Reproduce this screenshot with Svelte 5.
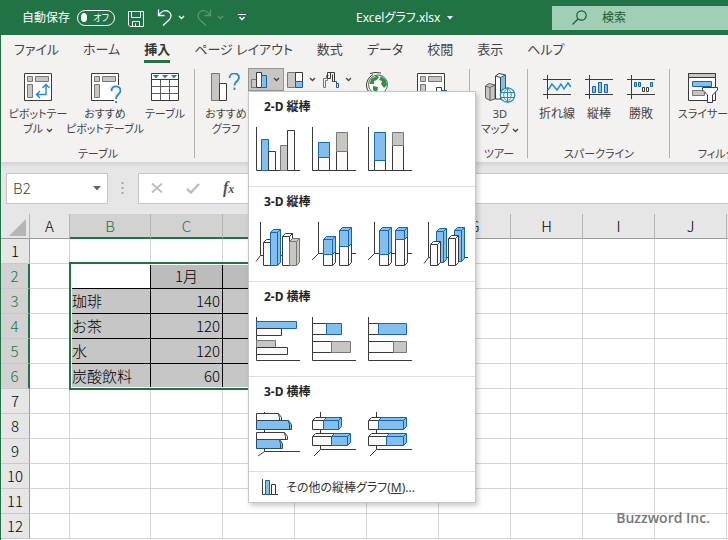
<script>
  const tabs = ['ファイル', 'ホーム', '挿入', 'ページ レイアウト', '数式', 'データ', '校閲', '表示', 'ヘルプ'];
  let activeTab = $state('挿入');
  let autosave = $state(false);
  let menuOpen = $state(true);
  let cellName = $state('B2');

  const cols = ['A', 'B', 'C', 'D', 'E', 'F', 'G', 'H', 'I', 'J', 'K'];
  const rows = Array.from({ length: 12 }, (_, i) => i + 1);
  const selCols = ['B', 'C', 'D', 'E'];
  const cells = {
    C2: '1月',
    B3: '珈琲', C3: 140,
    B4: 'お茶', C4: 120,
    B5: '水', C5: 120,
    B6: '炭酸飲料', C6: 60,
  };
  const selected = (c, r) => selCols.includes(c) && r > 1 && r < 7;

  // bars: [x, y, width, height, colour], depth > 0 draws them as boxes
  const sections = [
    {
      title: '2-D 縦棒', depth: 0,
      charts: [
        { name: '集合縦棒', axis: 'M.5 0V43.5H44', bars: [[5.5, 12.5, 7, 31, 'blue'], [12.5, 24.5, 7, 19, 'white'], [24.5, 18.5, 7, 25, 'gray'], [31.5, 3.5, 7, 40, 'white']] },
        { name: '積み上げ縦棒', axis: 'M.5 0V43.5H44', bars: [[6.5, 30.5, 11, 13, 'white'], [6.5, 15.5, 11, 15, 'blue'], [24.5, 24.5, 11, 19, 'white'], [24.5, 5.5, 11, 19, 'gray']] },
        { name: '100% 積み上げ縦棒', axis: 'M.5 0V43.5H44', bars: [[6.5, 33.5, 11, 10, 'white'], [6.5, 5.5, 11, 28, 'blue'], [24.5, 18.5, 11, 25, 'white'], [24.5, 5.5, 11, 13, 'gray']] },
      ],
    },
    {
      title: '3-D 縦棒', depth: 3,
      charts: [
        { name: '3-D 集合縦棒', axis: 'M4.5 0V33.5M0 39.5L4.5 33.5H44', bars: [[7.5, 20.5, 7, 23, 'white'], [14.5, 10.5, 7, 33, 'blue'], [26.5, 14.5, 7, 29, 'white'], [33.5, 19.5, 7, 24, 'gray']] },
        { name: '3-D 積み上げ縦棒', axis: 'M6.5 0V31.5M0 38L6.5 31.5H44', bars: [[11.5, 32.5, 9, 11, 'white'], [11.5, 17.5, 9, 15, 'blue'], [27.5, 24.5, 9, 19, 'white'], [27.5, 8.5, 9, 16, 'blue']] },
        { name: '3-D 100% 積み上げ縦棒', axis: 'M6.5 0V31.5M0 38L6.5 31.5H44', bars: [[11.5, 32.5, 9, 11, 'white'], [11.5, 8.5, 9, 24, 'blue'], [27.5, 17.5, 9, 26, 'white'], [27.5, 8.5, 9, 9, 'blue']] },
        { name: '3-D 縦棒', axis: 'M4.5 0V35.5M0 41.5L4.5 35.5H44', bars: [[12.5, 9.5, 7, 31, 'blue'], [6.5, 22.5, 7, 21, 'white'], [30.5, 8.5, 7, 31, 'blue'], [24.5, 16.5, 7, 27, 'white']] },
      ],
    },
    {
      title: '2-D 横棒', depth: 0,
      charts: [
        { name: '集合横棒', axis: 'M.5 0V43.5H44', bars: [[0.5, 4.5, 40, 7, 'blue'], [0.5, 11.5, 25, 7, 'white'], [0.5, 23.5, 19, 7, 'gray'], [0.5, 30.5, 31, 7, 'white']] },
        { name: '積み上げ横棒', axis: 'M.5 0V43.5H44', bars: [[0.5, 6.5, 14, 11, 'white'], [14.5, 6.5, 15, 11, 'blue'], [0.5, 24.5, 19, 11, 'white'], [19.5, 24.5, 19, 11, 'gray']] },
        { name: '100% 積み上げ横棒', axis: 'M.5 0V43.5H44', bars: [[0.5, 6.5, 10, 11, 'white'], [10.5, 6.5, 28, 11, 'blue'], [0.5, 24.5, 25, 11, 'white'], [25.5, 24.5, 13, 11, 'gray']] },
      ],
    },
    {
      title: '3-D 横棒', depth: 3,
      charts: [
        { name: '3-D 集合横棒', axis: 'M8.5 0V39.5M2 44L8.5 39.5H44', low: true, bars: [[0.5, 1.5, 22, 7, 'white'], [0.5, 8.5, 32, 9, 'blue'], [0.5, 20.5, 28, 7, 'white'], [0.5, 27.5, 23, 9, 'blue']] },
        { name: '3-D 積み上げ横棒', axis: 'M8.5 0V37.5M2 44L8.5 37.5H44', bars: [[0.5, 8.5, 11, 9, 'white'], [11.5, 8.5, 15, 9, 'blue'], [0.5, 24.5, 19, 9, 'white'], [19.5, 24.5, 16, 9, 'blue']] },
        { name: '3-D 100% 積み上げ横棒', axis: 'M8.5 0V37.5M2 44L8.5 37.5H44', bars: [[0.5, 8.5, 10, 9, 'white'], [10.5, 8.5, 25, 9, 'blue'], [0.5, 24.5, 18, 9, 'white'], [18.5, 24.5, 17, 9, 'blue']] },
      ],
    },
  ];

  function barPath([x, y, w, h], depth, low) {
    const r = x + w, b = y + h;
    if (!depth) return `M${x} ${y}H${r}V${b}H${x}Z`;
    // clustered bars show only the end cap, dropping to the right
    if (low) return `M${x} ${y}H${r}L${r + 3} ${y + 4}V${b}H${x}ZM${r} ${y}V${y + 1}L${r + 1} ${y + 4}V${b}`;
    return `M${x} ${y}L${x + 3} ${y - 3}H${r + 3}V${b - 3}L${r} ${b}H${x}ZM${x} ${y}H${r}V${b}M${r} ${y}L${r + 3} ${y - 3}`;
  }
</script>

{#snippet chevron()}
  <svg class="chev" width="7" height="5" viewBox="0 0 7 5"><path d="M1 1L3.500 3.500L6 1" fill="none" stroke="currentColor" stroke-width="1.300" /></svg>
{/snippet}

<div class="app">
  <header class="titlebar">
    <div class="quick">
      <span class="label" id="autosave">自動保存</span>
      <button class="toggle" role="switch" aria-checked={autosave} aria-labelledby="autosave" onclick={() => (autosave = !autosave)}><i></i>オフ</button>
      <button class="save" aria-label="上書き保存">
        <svg width="16" height="16" viewBox="0 0 16 16" fill="none" stroke="currentColor"><path d="M.5.5H15.500V15.500H2L.5 14ZM3.500.5V6.500H12.500V.5M4.500 15.500V10.500H11.500V15.500M7.500 15V12.500" /></svg>
      </button>
      <button class="undo" aria-label="元に戻す">
        <svg width="16" height="17" viewBox="0 0 16 17" fill="none" stroke="currentColor" stroke-width="1.300"><path d="M1.500.5V6.500H7.500M1.500 6.500C4 2.500 8 .5 11.500 2.500C15 4.500 14.500 8.500 12 11L6 16.500" /></svg>
        {@render chevron()}
      </button>
      <button class="redo" aria-label="やり直し">
        <svg width="16" height="17" viewBox="0 0 16 17" fill="none" stroke="currentColor" stroke-width="1.300"><path d="M14.500.5V6.500H8.500M14.500 6.500C12 2.500 8 .5 4.500 2.500C1 4.500 1.500 8.500 4 11L10 16.500" /></svg>
        {@render chevron()}
      </button>
      <button aria-label="クイック アクセス ツール バーのユーザー設定">
        <svg width="8" height="7" viewBox="0 0 8 7" fill="none" stroke="currentColor"><path d="M0 .5H8" /><path d="M1.500 3L4 5.500L6.500 3" stroke-width="1.500" /></svg>
      </button>
    </div>
    <button class="filename">Excelグラフ.xlsx
      <svg width="6" height="4" viewBox="0 0 6 4"><path d="M0 0H6L3 3.500Z" fill="currentColor" /></svg>
    </button>
    <label class="search">
      <svg width="15" height="15" viewBox="0 0 15 15" fill="none" stroke="currentColor" stroke-width="1.200"><circle cx="9.500" cy="5.500" r="4.700" /><path d="M6 9L.5 14.500" /></svg>
      <input type="text" placeholder="検索" aria-label="検索" />
    </label>
  </header>

  <nav class="tabs">
    {#each tabs as t}
      <button class="tab" class:active={activeTab === t} onclick={() => (activeTab = t)}>{t}</button>
    {/each}
  </nav>

  <div class="ribbon">
    <section class="group tables">
      <div class="tools">
        <button class="tool w64">
          <svg width="28" height="28" viewBox="0 0 28 28"><path class="sheet" d="M.5.5H27.500V27.500H.5Z" /><path class="part" d="M3.500 3.500H8.500V8.500H3.500ZM11.500 3.500H24.500V8.500H11.500ZM3.500 11.500H8.500V24.500H3.500Z" /><path class="accent" d="M22 11.500V21.500H12.500M18.500 15L22 11.500L25.500 15M16 18L12.500 21.500L16 25" /></svg>
          <span>ピボットテー<br />ブル {@render chevron()}</span>
        </button>
        <button class="tool w70">
          <svg width="32" height="30" viewBox="-2 0 32 30"><path class="sheet" d="M.5.5H27.500V27.500H.5Z" /><path class="part" d="M3.500 3.500H8.500V8.500H3.500ZM11.500 3.500H24.500V8.500H11.500ZM3.500 11.500H8.500V24.500H3.500Z" /><path d="M19 12H30V30H23V20H19Z" fill="#f3f2f1" /><path class="accent big" d="M20.500 18C20.500 12 29.500 12 29.500 17.500C29.500 21.500 25 21 25 26M25 28V30" /></svg>
          <span>おすすめ<br />ピボットテーブル</span>
        </button>
        <button class="tool w50">
          <svg width="28" height="28" viewBox="0 0 28 28"><path class="sheet" d="M.5.5H27.500V27.500H.5Z" /><path d="M0 6.500H28" stroke="#3b3a39" /><path d="M.5 13.500H27.500M.5 20.500H27.500M9.500 7V27M18.500 7V27" stroke="#605e5c" /><path d="M2 2H8L5 5.500ZM11 2H17L14 5.500ZM20 2H26L23 5.500Z" fill="#1e7fc4" /></svg>
          <span>テーブル</span>
        </button>
      </div>
      <h2>テーブル</h2>
    </section>

    <section class="group charts">
      <div class="tools">
        <button class="tool w50">
          <svg width="30" height="28" viewBox="0 0 30 28"><path d="M.5.5H8.500V27.500H.5Z" fill="#c8c6c4" stroke="#797775" /><path d="M8.500 10.500H15.500V27.500H8.500Z" fill="#fff" stroke="#3b3a39" /><path class="accent big" d="M18.500 5C18.500-1 28-1 28 4.500C28 8.500 23.500 8 23.500 12.500M23.500 14.500V17" /></svg>
          <span>おすすめ<br />グラフ</span>
        </button>
        <div class="small">
          <button class="pressed" aria-label="縦棒/横棒グラフの挿入" aria-expanded={menuOpen} onclick={() => (menuOpen = !menuOpen)}>
            <svg width="17" height="16" viewBox="0 0 17 16"><path d="M.5 7.500H5.500V15.500H.5Z" fill="#c8c6c4" stroke="#797775" /><path d="M5.500.5H10.500V15.500H5.500Z" fill="#fff" stroke="#3b3a39" /><path d="M10.500 3.500H15.500V15.500H10.500Z" fill="#83beec" stroke="#1c5f9e" /></svg>
            {@render chevron()}
          </button>
          <button aria-label="階層構造グラフの挿入">
            <svg width="17" height="16" viewBox="0 0 17 16"><path d="M.5.5H8.500V15.500H.5Z" fill="#c8c6c4" stroke="#797775" /><path d="M8.500.5H15.500V9.500H8.500Z" fill="#fff" stroke="#3b3a39" /><path d="M8.500 9.500H15.500V15.500H8.500Z" fill="#83beec" stroke="#1c5f9e" /></svg>
            {@render chevron()}
          </button>
          <button aria-label="ウォーターフォール図の挿入">
            <svg width="17" height="16" viewBox="0 0 17 16" fill="#fff"><path d="M.5 15.500V6.500H3.500V3.500H5.500M2.500 15.500V8.500H4.500V6.500M.5 15.500H2.500" fill="none" stroke="#797775" /><path d="M4.500 6.500V.5H11.500V9.500H9.500V2.500M7.500.5V6.500H4.500" fill="none" stroke="#3b3a39" /><path d="M9.500 9.500H13.500V15.500H15.500V11.500H13.500" fill="none" stroke="#1c5f9e" /></svg>
            {@render chevron()}
          </button>
        </div>
        <button class="plain" aria-label="マップ">
          <svg width="24" height="26" viewBox="0 0 24 26"><circle cx="13" cy="12.500" r="9.500" fill="#fff" stroke="#605e5c" /><path d="M6 7L12 3.500L14 5L12 8L9 9L9 12L4.500 12ZM16 4L21 8L22 13L19 16L16 12L17 9L14 8ZM8 14L13 15L12 21L8 18Z" fill="#2f9146" /><path d="M8 2.500C2 6-1 14 4 20M5 1.500L10 .5L16 1" fill="none" stroke="#3b3a39" /></svg>
        </button>
        <button class="plain pivot" aria-label="ピボットグラフ">
          <svg width="30" height="28" viewBox="0 0 30 28"><path class="sheet" d="M.5.5H27.500V27.500H.5Z" /><path class="part" d="M3.500 3.500H8.500V8.500H3.500ZM11.500 3.500H24.500V8.500H11.500ZM3.500 11.500H8.500V24.500H3.500Z" /><path d="M19.500 27V14.500H24.500V27" fill="#fff" stroke="#3b3a39" /><path d="M24.500 17.500H29.500V27.500H24.500Z" fill="#83beec" stroke="#1c5f9e" /></svg>
        </button>
      </div>
      {#if menuOpen}
        <div class="menu" role="menu">
          {#each sections as s}
            <div class="section">
              <h3>{s.title}</h3>
              <div class="gallery">
                {#each s.charts as c}
                  <button class="chart" role="menuitem" aria-label={c.name}>
                    <svg width="44" height="44" viewBox="0 0 44 44">
                      <path d={c.axis} class="axis" />
                      {#each c.bars as b}
                        <path class={b[4]} class:dark={c.low} d={barPath(b, s.depth, c.low)} />
                      {/each}
                    </svg>
                  </button>
                {/each}
              </div>
            </div>
          {/each}
          <button class="more" role="menuitem">
            <svg width="16" height="16" viewBox="0 0 16 16"><path class="axis" d="M.5 0V15.500H16" /><path class="blue" d="M3.500 1.500H7.500V15.500H3.500Z" /><path class="white" d="M9.500 5.500H13.500V15.500H9.500Z" /></svg>
            <span>その他の縦棒グラフ(<u>M</u>)...</span>
          </button>
        </div>
      {:else}
        <h2>グラフ</h2>
      {/if}
    </section>

    <section class="group tour">
      <div class="tools">
        <button class="tool w50">
          <svg width="32" height="30" viewBox="0 0 32 30" stroke-linejoin="round"><path d="M1.500 13L5 10.500L11 12V26L6 27.500L1.500 25Z" fill="#c8c6c4" stroke="#605e5c" /><path d="M1.500 13L6 14.500V27.500M6 14.500L11 12" fill="none" stroke="#605e5c" /><path d="M11.500 3L15 .5L21.500 2V26H11.500Z" fill="#fff" stroke="#3b3a39" /><path d="M16.500 4.500L21.500 2V26H16.500Z" fill="#83beec" stroke="#1c5f9e" /><path d="M11.500 3L16.500 4.500V26" fill="none" stroke="#3b3a39" /><circle cx="23.500" cy="22" r="7.200" fill="#fff" stroke="#1e8bcd" stroke-width="1.300" /><path d="M16.500 19.500H30.500M16.500 24.500H30.500M23.500 15V29M23.500 15C18.500 19 18.500 25 23.500 29C28.500 25 28.500 19 23.500 15" fill="none" stroke="#1e8bcd" /></svg>
          <span>3D<br />マップ {@render chevron()}</span>
        </button>
      </div>
      <h2>ツアー</h2>
    </section>

    <section class="group spark">
      <div class="tools">
        <button class="tool w42">
          <svg width="28" height="28" viewBox="0 0 28 28"><path class="axis" d="M0 6.500H28M0 21.500H28M4.500 2V26" /><path class="accent" d="M5 17L9 11L14 17L18 11L21 16L25 10L28 14" /></svg>
          <span>折れ線</span>
        </button>
        <button class="tool w42">
          <svg width="28" height="28" viewBox="0 0 28 28"><path class="axis" d="M0 6.500H28M0 21.500H28M4.500 2V26" /><path class="blue" d="M7.500 13.500H10.500V19.500H7.500ZM13.500 9.500H16.500V19.500H13.500ZM19.500 11.500H22.500V19.500H19.500Z" /></svg>
          <span>縦棒</span>
        </button>
        <button class="tool w42">
          <svg width="28" height="28" viewBox="0 0 28 28"><path class="axis" d="M0 6.500H28M0 21.500H28M4.500 2V26" /><path class="blue" d="M7.500 9.500H9.500V13.500H7.500ZM11.500 9.500H13.500V13.500H11.500ZM23.500 9.500H25.500V13.500H23.500Z" /><path class="white" d="M15.500 14.500H17.500V18.500H15.500ZM19.500 14.500H21.500V18.500H19.500Z" /></svg>
          <span>勝敗</span>
        </button>
      </div>
      <h2>スパークライン</h2>
    </section>

    <section class="group filter">
      <div class="tools">
        <button class="tool w56">
          <svg width="30" height="30" viewBox="0 0 30 30"><path class="sheet" d="M.5.5H27.500V27.500H.5Z" /><path d="M.5.5H27.500V4.500H.5Z" fill="#c8c6c4" stroke="#3b3a39" /><path class="blue" d="M4.500 8.500H23.500V13.500H4.500Z" /><path class="gray" d="M4.500 17.500H16.500V22.500H4.500Z" /><path d="M14.500 14.500H29.500V17L24.500 22V29.500H19.500V22L14.500 17Z" fill="#fff" stroke="#3b3a39" /></svg>
          <span>スライサー</span>
        </button>
      </div>
      <h2>フィルター</h2>
    </section>
  </div>

  <div class="formula">
    <div class="namebox">
      <input type="text" bind:value={cellName} aria-label="名前ボックス" />
      <button aria-label="名前の一覧"><svg width="8" height="5" viewBox="0 0 8 5"><path d="M0 0H8L4 4.500Z" fill="#666" /></svg></button>
    </div>
    <svg class="grip" width="3" height="12" viewBox="0 0 3 12"><path d="M.5 0H2.500V2H.5ZM.5 5H2.500V7H.5ZM.5 10H2.500V12H.5Z" fill="#a6a6a6" /></svg>
    <div class="fxbar">
      <button aria-label="キャンセル"><svg width="12" height="10" viewBox="0 0 12 10"><path d="M1 .5L11 9.500M11 .5L1 9.500" stroke="#bdbdbd" stroke-width="1.800" /></svg></button>
      <button aria-label="入力"><svg width="14" height="11" viewBox="0 0 14 11"><path d="M1 6L5 9.500L13 1" fill="none" stroke="#bdbdbd" stroke-width="2.400" /></svg></button>
      <button class="fx" aria-label="関数の挿入">f<sub>x</sub></button>
      <input type="text" aria-label="数式バー" />
    </div>
  </div>

  <main class="sheetarea">
    <table>
      <colgroup>
        <col class="c-num" />
        {#each cols as c}<col class="c-{c}" />{/each}
      </colgroup>
      <thead>
        <tr>
          <th class="corner"><svg width="17" height="17" viewBox="0 0 17 17"><path d="M17 0V17H0Z" fill="#b5b5b5" /></svg></th>
          {#each cols as c}<th class:sel={selCols.includes(c)}>{c}</th>{/each}
        </tr>
      </thead>
      <tbody>
        {#each rows as r}
          <tr>
            <th class:sel={r > 1 && r < 7}>{r}</th>
            {#each cols as c}
              <td class:sel={selected(c, r)} class:head={r === 2} class:first={c === 'B'}>{cells[c + r] ?? ''}</td>
            {/each}
          </tr>
        {/each}
      </tbody>
    </table>
    <div class="selection"></div>
  </main>

  <p class="credit">Buzzword Inc.</p>
</div>

<style>
  :global(body) { margin: 0; overflow: hidden; }
  .app {
    position: relative; box-sizing: border-box; height: 100vh; overflow: hidden;
    display: flex; flex-direction: column; border-left: 1px solid #217346; background: #e6e6e6;
    font: 12px/15px "Noto Sans", "Noto Sans CJK JP", sans-serif; font-feature-settings: "palt"; color: #444;
  }
  button { border: 0; padding: 0; background: none; color: inherit; font: inherit; font-feature-settings: inherit; white-space: nowrap; }
  input { border: 0; padding: 0; background: none; color: inherit; font: inherit; min-width: 0; outline: 0; }
  svg { display: block; flex: none; }
  .chev { display: inline-block; vertical-align: middle; }

  .titlebar { flex: none; height: 35px; display: grid; grid-template-columns: 355px 196px 1fr; align-items: center; background: #217346; color: #fff; }
  .quick { display: flex; align-items: center; padding-left: 21px; }
  .quick .label { width: 55px; }
  .toggle { width: 38px; height: 16px; box-sizing: border-box; display: flex; align-items: center; gap: 6px; padding: 0 5px 0 3px; border: 1px solid #fff; border-radius: 8px; font-size: 9px; line-height: 12px; }
  .toggle i { width: 9px; height: 9px; border-radius: 50%; background: #fff; }
  .save { margin: 2px 13px 0; }
  .undo, .redo { display: flex; align-items: center; gap: 5px; margin-right: 11px; }
  .redo { color: #559a73; margin-right: 14px; }
  .filename { display: flex; align-items: center; gap: 7px; }
  .search { height: 24px; display: flex; align-items: center; gap: 15px; padding-left: 20px; background: #a1cfb5; color: #185c37; }
  .search input { flex: 1; }
  .search input::placeholder { color: #185c37; opacity: 1; }

  .tabs { flex: none; height: 30px; display: flex; gap: 24px; padding-left: 13px; background: #f3f2f1; }
  .tab { box-sizing: border-box; height: 28px; padding-top: 3px; border-bottom: 3px solid transparent; font-size: 13px; }
  .tab.active { border-color: #217346; font-weight: 700; color: #333; }

  .ribbon { flex: none; height: 97px; display: flex; background: #f3f2f1; }
  .group { position: relative; box-sizing: border-box; flex: none; display: flex; flex-direction: column; align-items: center; justify-content: space-between; padding: 3px 0 1px; }
  .group::after { content: ""; position: absolute; right: 0; top: 4px; bottom: 4px; width: 1px; background: #b3b0ad; }
  .group h2 { margin: 0; font: inherit; font-size: 11px; }
  .tools { align-self: stretch; display: flex; padding-left: 5px; }
  .tables { width: 194px; }
  .charts { width: 275px; }
  .tour { width: 58px; }
  .spark { width: 142px; }
  .filter { width: 104px; }
  .tables, .charts, .tour, .filter { font-size: 11px; }
  .spark .tools { padding-left: 8px; }
  .tool { display: flex; flex-direction: column; align-items: center; gap: 5px; padding-top: 5px; }
  .tool svg { height: 30px; }
  .tool svg:not([height="30"]):not(.chev) { height: 28px; margin-bottom: 2px; }
  .tool .chev { height: 5px; }
  .tool span { margin-top: -2px; }
  .w64 { width: 64px; }
  .w70 { width: 70px; }
  .w50 { width: 50px; }
  .w42 { width: 42px; }
  .w56 { width: 56px; }
  .charts .tools { padding-left: 6px; align-items: flex-start; }
  .small { display: flex; margin-left: -3px; }
  .small button { box-sizing: border-box; width: 36px; height: 23px; display: flex; align-items: center; gap: 5px; padding-left: 3px; }
  .small .pressed { background: #c8c6c4; box-shadow: inset 0 0 0 1px #979593; }
  .plain { padding: 4px 0 0 9px; }
  .plain.pivot { padding: 5px 0 0 28px; }

  .sheet { fill: #fff; stroke: #3b3a39; }
  .part, .gray { fill: #c8c6c4; stroke: #797775; }
  .accent { fill: none; stroke: #1e8bcd; stroke-width: 1.4; }
  .accent.big { stroke-width: 1.8; }
  .axis { fill: none; stroke: #3b3a39; }
  .blue { fill: #83beec; stroke: #1467a8; stroke-linejoin: round; }
  .white { fill: #fafafa; stroke: #3b3a39; stroke-linejoin: round; }
  .blue.dark { stroke: #234b6b; }

  .menu {
    position: absolute; z-index: 2; left: 53px; top: 26px; width: 226px; font-size: 12px;
    background: #fff; border: 1px solid #c6c6c6; box-shadow: 2px 3px 5px rgba(0, 0, 0, 0.2);
  }
  .section { border-bottom: 1px solid #e1dfdd; }
  .section h3 { margin: 0; padding: 7px 0 0 15px; height: 21px; font: 700 12px/15px "Noto Sans", "Noto Sans CJK JP", sans-serif; color: #252423; }
  .gallery { display: flex; gap: 12px; padding: 7px 7px 15px; }
  .chart svg { overflow: visible; }
  .more { width: 100%; height: 30px; display: flex; align-items: center; gap: 8px; padding-left: 13px; color: #333; }

  .formula { flex: none; height: 52px; box-sizing: border-box; display: flex; align-items: center; padding-left: 5px; background: linear-gradient(#d4d4d4, #e6e6e6 6px); }
  .namebox { box-sizing: border-box; width: 102px; height: 31px; display: flex; align-items: center; padding: 0 6px; background: #fff; border: 1px solid #c6c6c6; }
  .namebox input { flex: 1; font: 300 15px/20px "Noto Sans CJK JP", sans-serif; }
  .grip { margin: 0 14px 0 13px; }
  .fxbar { box-sizing: border-box; flex: 1; height: 31px; display: flex; align-items: center; gap: 23px; padding-left: 12px; background: #fff; border: 1px solid #c6c6c6; border-right: 0; }
  .fx { font: italic 700 16px/20px "Liberation Serif", serif; color: #555; }
  .fx sub { font-size: 12px; line-height: 12px; vertical-align: baseline; }
  .fxbar input { flex: 1; }

  .sheetarea { position: relative; flex: 1; overflow: hidden; background: #fff; }
  table { table-layout: fixed; width: 798px; border-collapse: separate; border-spacing: 0; font: 300 15px/20px "Noto Sans CJK JP", sans-serif; font-feature-settings: normal; color: #000; }
  col { width: 72px; }
  .c-num { width: 29px; }
  .c-A { width: 40px; }
  .c-B { width: 81px; }
  th, td { box-sizing: border-box; height: 25px; padding: 0 2px; border: 0 solid #d4d4d4; border-width: 0 1px 1px 0; white-space: nowrap; overflow: hidden; }
  th { background: #e6e6e6; border-color: #b5b5b5; font-weight: 300; text-align: center; }
  tbody th { border-color: #c8c8c8; border-right-color: #9b9b9b; }
  thead th { border-bottom-color: #9b9b9b; }
  th.sel { background: #d2d2d2; color: #217346; }
  thead th.sel { border-bottom: 2px solid #217346; }
  tbody th.sel { border-right: 2px solid #217346; }
  .corner svg { margin: 3px 0 0 6px; }
  td { text-align: right; }
  td.sel { background: #c6c6c6; border-color: #000; }
  td.sel.head { background: #bcbcbc; text-align: center; }
  td.sel.first { text-align: left; }
  td.sel.first.head { background: #fff; }
  .selection { position: absolute; left: 68px; top: 48px; width: 299px; height: 128px; box-sizing: border-box; border: 2px solid #217346; box-shadow: inset 0 0 0 1px #fff; pointer-events: none; }

  .credit { position: absolute; right: 18px; bottom: 12px; margin: 0; font: 600 14px/20px "Open Sans", sans-serif; color: #777; }
</style>
